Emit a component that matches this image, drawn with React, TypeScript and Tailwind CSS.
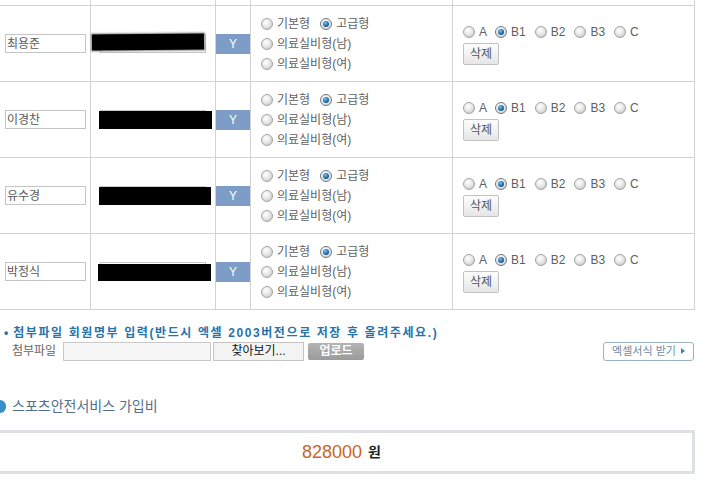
import React from "react";

function Radio({ checked }: { checked?: boolean }) {
  return (
    <span
      className={
        "inline-flex w-[12px] h-[12px] rounded-full border items-center justify-center shrink-0 " +
        (checked
          ? "border-[#6f7a84] bg-[radial-gradient(circle_at_40%_35%,#ffffff_0%,#e2e2e2_60%,#b8b8b8_100%)]"
          : "border-[#a3a3a3] bg-[radial-gradient(circle_at_40%_35%,#ffffff_0%,#e8e8e8_45%,#bcbcbc_100%)]")
      }
    >
      {checked && (
        <span className="w-[6px] h-[6px] rounded-full bg-[radial-gradient(circle_at_40%_35%,#7cc0ee_0%,#1d6aa6_55%,#0d3f66_100%)]" />
      )}
    </span>
  );
}

function Opt({ label, checked, gap = "mr-[10px]" }: { label: string; checked?: boolean; gap?: string }) {
  return (
    <span className={"inline-flex items-center " + gap}>
      <Radio checked={checked} />
      <span className="ml-[4px] text-[#5f5f5f]">{label}</span>
    </span>
  );
}

type RowData = {
  name: string;
  black: { l: string; t: string; w: string; h: string; extra?: string };
};

const rows: RowData[] = [
  { name: "최용준", black: { l: "left-[1px]", t: "top-[28px]", w: "w-[112px]", h: "h-[16px]", extra: "shadow-[0_0_2px_1px_rgba(0,0,0,0.45)] -rotate-[0.6deg]" } },
  { name: "이경찬", black: { l: "left-[8px]", t: "top-[29px]", w: "w-[113px]", h: "h-[18px]" } },
  { name: "유수경", black: { l: "left-[8px]", t: "top-[29px]", w: "w-[112px]", h: "h-[18px]" } },
  { name: "박정식", black: { l: "left-[7px]", t: "top-[30px]", w: "w-[113px]", h: "h-[17px]" } },
];

function Row({ r }: { r: RowData }) {
  return (
    <div className="flex h-[76px] border-b border-[#d3d3d3]">
      <div className="w-[91px] border-r border-[#d3d3d3] flex items-center">
        <div className="ml-[5px] w-[81px] h-[19px] border border-[#c4c4c4] flex items-center pl-[1px] text-[12px] text-[#5a5a5a]">
          {r.name}
        </div>
      </div>
      <div className="w-[125px] border-r border-[#d3d3d3] flex items-center relative">
        <div className="ml-[9px] w-[106px] h-[19px] border border-[#c8c8c8]" />
        <div className={"absolute bg-black " + r.black.l + " " + r.black.t + " " + r.black.w + " " + r.black.h + " " + (r.black.extra ?? "")} />
      </div>
      <div className="w-[35px] border-r border-[#d3d3d3] flex items-center">
        <div className="w-[34px] h-[20px] bg-[#7d9dc6] text-white text-[12px] font-light flex items-center justify-center">Y</div>
      </div>
      <div className="w-[202px] border-r border-[#d3d3d3] flex flex-col justify-center pl-[10px] text-[12px]">
        <div className="h-[20px] flex items-center">
          <Opt label="기본형" />
          <Opt label="고급형" checked />
        </div>
        <div className="h-[20px] flex items-center">
          <Opt label="의료실비형(남)" />
        </div>
        <div className="h-[20px] flex items-center">
          <Opt label="의료실비형(여)" />
        </div>
      </div>
      <div className="w-[242px] border-r border-[#d3d3d3] flex flex-col justify-center pl-[10px] text-[12px]">
        <div className="h-[20px] flex items-center">
          <Opt label="A" gap="mr-[8px]" />
          <Opt label="B1" checked gap="mr-[9px]" />
          <Opt label="B2" gap="mr-[9px]" />
          <Opt label="B3" gap="mr-[9px]" />
          <Opt label="C" />
        </div>
        <div className="mt-[1px] mb-[1px]">
          <button className="w-[36px] h-[22px] rounded-[2px] border border-[#c2c2c2] bg-[linear-gradient(#fdfdfd,#e6e6e6)] text-[12px] text-[#555] flex items-center justify-center">
            삭제
          </button>
        </div>
      </div>
    </div>
  );
}

export default function App() {
  return (
    <div className="w-[713px] h-[480px] bg-white overflow-hidden font-['Liberation_Sans','Noto_Sans_CJK_KR',sans-serif]">
      <div className="w-[695px]">
        <div className="flex h-[6px] border-b border-[#d3d3d3]">
          <div className="w-[91px] border-r border-[#d3d3d3]" />
          <div className="w-[125px] border-r border-[#d3d3d3]" />
          <div className="w-[35px] border-r border-[#d3d3d3]" />
          <div className="w-[202px] border-r border-[#d3d3d3]" />
          <div className="w-[242px] border-r border-[#d3d3d3]" />
        </div>
        {rows.map((r) => (
          <Row key={r.name} r={r} />
        ))}
      </div>

      <div className="mt-[14px] h-[17px] flex items-center pl-[4px] text-[12px] font-bold text-[#2673ab]">
        <span className="mr-[5px]">•</span>
        <span className="tracking-[1.6px]">첨부파일 회원명부 입력(반드시 엑셀 2003버전으로 저장 후 올려주세요.)</span>
      </div>
      <div className="h-[20px] w-[694px] flex items-center text-[12px]">
        <span className="ml-[12px] w-[51px] text-[#666]">첨부파일</span>
        <div className="w-[148px] h-[19px] border border-[#c9c9c9] bg-[#f7f7f7]" />
        <button className="ml-[2px] w-[91px] h-[19px] border border-[#c4c4c4] bg-[#f3f3f3] text-[#111] text-[12px] flex items-center justify-center">
          찾아보기...
        </button>
        <button className="ml-[4px] w-[56px] h-[17px] rounded-[2px] bg-[linear-gradient(#b4b4b4,#9a9a9a)] text-white font-bold text-[12px] flex items-center justify-center">
          업로드
        </button>
        <button className="ml-auto w-[91px] h-[19px] rounded-[3px] border border-[#9bb1c6] bg-white text-[11px] text-[#6f8aa5] flex items-center justify-center">
          엑셀서식 받기
          <span className="ml-[5px] w-0 h-0 border-y-[3px] border-y-transparent border-l-[4px] border-l-[#3d82bd]" />
        </button>
      </div>

      <div className="mt-[37px] h-[16px] flex items-center">
        <span className="w-[6px] h-[13px] rounded-r-[6px] bg-[#3b8dc9]" />
        <span className="ml-[6px] text-[14px] text-[#52708e]">스포츠안전서비스 가입비</span>
      </div>

      <div className="mt-[16px] w-[695px] h-[44px] border-[3px] border-l-0 border-[#dde1e5] flex items-center pl-[302px]">
        <span className="text-[18px] text-[#c8651f]">828000</span>
        <span className="ml-[6px] text-[14px] font-bold text-[#222]">원</span>
      </div>
    </div>
  );
}
